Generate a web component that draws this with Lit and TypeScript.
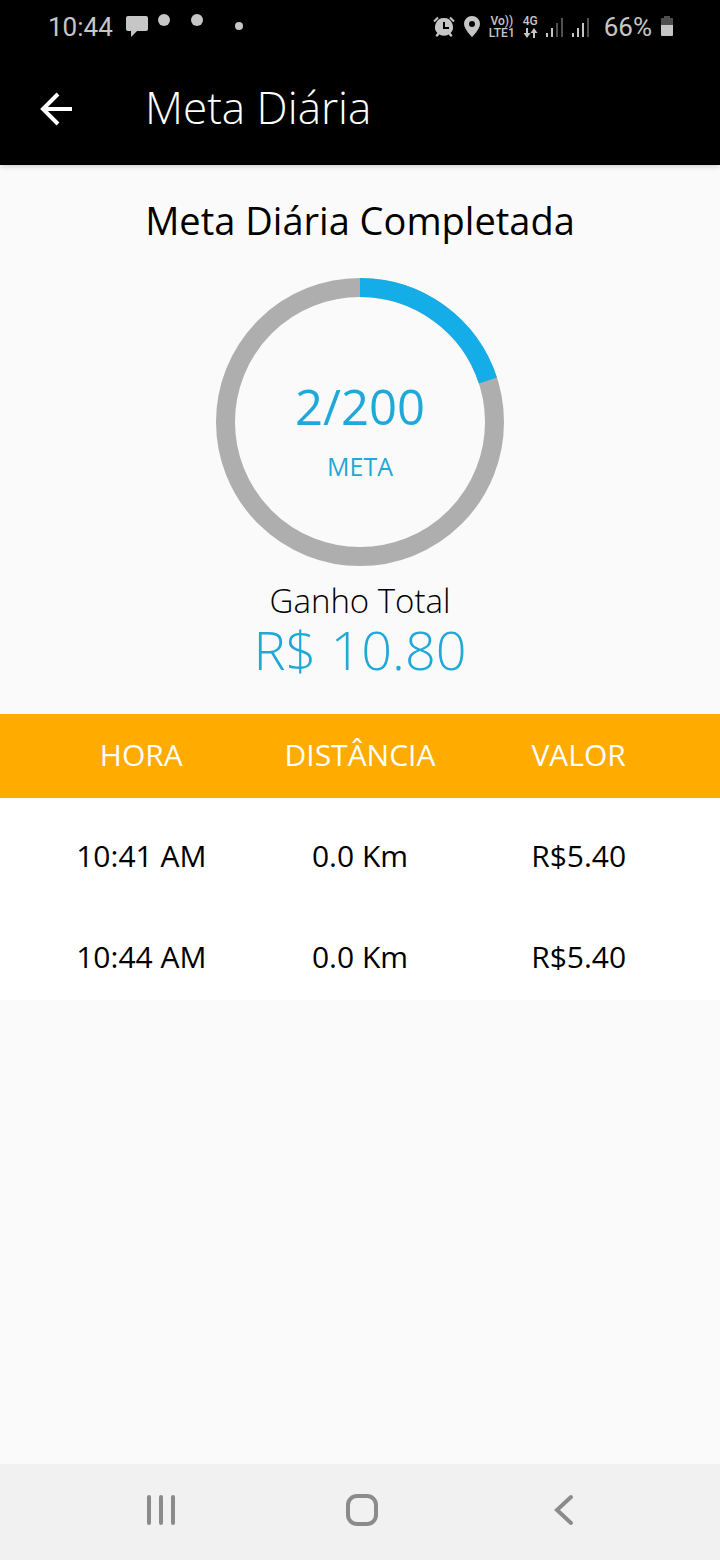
import { LitElement, html, css, svg } from "lit";
import { customElement, property } from "lit/decorators.js";

interface Trip {
  time: string;
  distance: string;
  value: string;
}

@customElement("status-bar")
class StatusBar extends LitElement {
  static styles = css`
    :host {
      display: flex;
      align-items: center;
      justify-content: space-between;
      height: 54px;
      padding: 0 46px 0 48px;
      color: #c6c6c6;
      font-family: Roboto, sans-serif;
      font-size: 26px;
      line-height: 30px;
    }
    .group {
      display: flex;
      align-items: center;
    }
    .left {
      gap: 12px;
    }
    .right {
      gap: 8px;
    }
    .mini {
      font-size: 12px;
      line-height: 12px;
      font-weight: 500;
      text-align: center;
    }
    .network {
      display: flex;
      flex-direction: column;
      align-items: center;
    }
    .percent {
      padding-left: 6px;
    }
    svg {
      display: block;
      fill: currentColor;
    }
  `;

  private signal(strong: number) {
    const bars = [4, 9, 14, 19];
    return html`<svg width="18" height="22" viewBox="0 0 18 22" aria-hidden="true">
      ${bars.map(
        (h, i) =>
          svg`<rect x=${i * 5} y=${21 - h} width="2" height=${h} opacity=${i < strong ? 1 : 0.4}></rect>`
      )}
    </svg>`;
  }

  render() {
    return html`
      <div class="group left">
        <span>10:44</span>
        <svg width="120" height="30" viewBox="0 0 120 30" aria-hidden="true">
          <path d="M3 4h18q2 0 2 2v11q0 2-2 2h-9l-6 6v-6h-3q-2 0-2-2V6q0-2 2-2z" />
          <circle cx="39" cy="8" r="6" />
          <circle cx="72" cy="8" r="6" />
          <circle cx="114" cy="14" r="4" />
        </svg>
      </div>
      <div class="group right">
        <svg width="22" height="22" viewBox="0 0 22 22" aria-hidden="true">
          <path
            fill-rule="evenodd"
            d="M11 2a9 9 0 0 1 6.600 15.100l2 2.400-1.700 1.400-2.300-2.400a9 9 0 0 1-9.200 0l-2.300 2.400-1.700-1.400 2-2.400A9 9 0 0 1 11 2zM10 6v7h6v-2h-4V6z"
          />
          <path d="M1 5.500l4-4M21 5.500l-4-4" stroke="currentColor" stroke-width="2" />
        </svg>
        <svg width="18" height="22" viewBox="0 0 18 22" aria-hidden="true">
          <path
            fill-rule="evenodd"
            d="M9 0a8 8 0 0 1 8 8c0 5-8 13-8 13S1 13 1 8a8 8 0 0 1 8-8zm0 5a3 3 0 1 0 0 6 3 3 0 0 0 0-6z"
          />
        </svg>
        <span class="mini">Vo))<br />LTE1</span>
        <span class="mini network">
          4G
          <svg width="15" height="12" viewBox="0 0 15 12" aria-hidden="true">
            <path d="M3 1h2v5h2.500L4 11 .5 6H3zM10 11V6H7.500L11 1l3.500 5H12v5z" />
          </svg>
        </span>
        ${this.signal(2)} ${this.signal(3)}
        <span class="percent">66%</span>
        <svg width="14" height="22" viewBox="0 0 14 22" aria-hidden="true">
          <path d="M4 0h6v2h3v7H1V2h3z" opacity="0.4" />
          <path d="M1 9h12v10q0 1-1 1H2q-1 0-1-1z" />
        </svg>
      </div>
    `;
  }
}

@customElement("goal-ring")
class GoalRing extends LitElement {
  @property({ type: Number }) percent = 0;
  @property() label = "";

  static styles = css`
    :host {
      display: grid;
      place-items: center;
      width: 288px;
      height: 288px;
      color: #1fa8d8;
    }
    svg,
    .text {
      grid-area: 1 / 1;
    }
    .ring {
      fill: none;
      stroke-width: 19px;
    }
    .track {
      stroke: #aeaeae;
    }
    .done {
      stroke: #14ade8;
    }
    .text {
      display: flex;
      flex-direction: column;
      align-items: center;
      gap: 10px;
      padding-top: 18px;
    }
    .count {
      font-size: 49px;
      line-height: 60px;
    }
    .caption {
      font-size: 25px;
      line-height: 40px;
    }
  `;

  render() {
    return html`
      <svg width="288" height="288" viewBox="0 0 288 288" aria-hidden="true">
        <circle class="ring track" cx="144" cy="144" r="134.500" />
        <circle
          class="ring done"
          cx="144"
          cy="144"
          r="134.500"
          pathLength="100"
          stroke-dasharray="${this.percent} 100"
          transform="rotate(-90 144 144)"
        />
      </svg>
      <div class="text">
        <span class="count">${this.label}</span>
        <span class="caption">META</span>
      </div>
    `;
  }
}

@customElement("app-root")
class AppRoot extends LitElement {
  private trips: Trip[] = [
    { time: "10:41 AM", distance: "0.0 Km", value: "R$5.40" },
    { time: "10:44 AM", distance: "0.0 Km", value: "R$5.40" },
  ];

  static styles = css`
    :host {
      display: flex;
      flex-direction: column;
      min-height: 100vh;
      background: #fafafa;
      color: #000;
      font-family: "Open Sans", "Noto Sans", sans-serif;
    }
    .top {
      background: #000;
      color: #fff;
      box-shadow: 0 1px 6px rgba(0, 0, 0, 0.2);
    }
    .appbar {
      display: flex;
      align-items: center;
      gap: 67px;
      height: 111px;
      padding: 0 34px 2px;
      box-sizing: border-box;
    }
    button {
      display: grid;
      place-items: center;
      padding: 0;
      border: 0;
      background: none;
      color: inherit;
    }
    .back {
      width: 44px;
      height: 44px;
    }
    h1,
    h2,
    p {
      margin: 0;
    }
    h1 {
      padding-bottom: 4px;
      font-size: 44px;
      line-height: 56px;
      font-weight: 300;
    }
    main {
      flex: 1;
    }
    .summary {
      display: flex;
      flex-direction: column;
      align-items: center;
      padding: 27px 16px 38px;
    }
    h2 {
      margin-bottom: 30px;
      font-size: 38px;
      line-height: 56px;
      font-weight: 400;
    }
    .earned {
      padding-top: 14px;
      font-size: 33px;
      line-height: 42px;
      font-weight: 300;
    }
    .total {
      color: #1fa8d8;
      font-size: 54px;
      line-height: 54px;
      font-weight: 300;
    }
    table,
    thead,
    tbody {
      display: block;
    }
    table {
      font-size: 30px;
      line-height: 42px;
      text-align: center;
    }
    tr {
      display: grid;
      grid-template-columns: repeat(3, 1fr);
      padding: 0 32px;
    }
    th,
    td {
      padding: 0;
      font-weight: 400;
    }
    thead {
      background: #ffab00;
      color: #fff;
    }
    th {
      padding: 20px 0 22px;
    }
    tbody {
      background: #fff;
    }
    td {
      padding: 37px 0 22px;
    }
    .nav {
      display: grid;
      grid-template-columns: repeat(3, 1fr);
      height: 96px;
      padding: 0 56px 4px 60px;
      box-sizing: border-box;
      background: #f1f1f1;
      color: #8b8b8b;
    }
    svg {
      display: block;
      fill: none;
      stroke: currentColor;
      stroke-width: 4px;
    }
  `;

  render() {
    return html`
      <header class="top">
        <status-bar></status-bar>
        <div class="appbar">
          <button class="back" aria-label="Voltar">
            <svg width="34" height="34" viewBox="0 0 34 34">
              <path d="M33 17H4M19 2L4 17l15 15" />
            </svg>
          </button>
          <h1>Meta Diária</h1>
        </div>
      </header>
      <main>
        <section class="summary">
          <h2>Meta Diária Completada</h2>
          <goal-ring percent="20" label="2/200"></goal-ring>
          <p class="earned">Ganho Total</p>
          <p class="total">R$ 10.80</p>
        </section>
        <table>
          <thead>
            <tr>
              <th scope="col">HORA</th>
              <th scope="col">DISTÂNCIA</th>
              <th scope="col">VALOR</th>
            </tr>
          </thead>
          <tbody>
            ${this.trips.map(
              (t) => html`<tr>
                <td>${t.time}</td>
                <td>${t.distance}</td>
                <td>${t.value}</td>
              </tr>`
            )}
          </tbody>
        </table>
      </main>
      <nav class="nav">
        <button aria-label="Recentes">
          <svg width="32" height="32" viewBox="0 0 32 32" stroke-linecap="round">
            <path d="M4 3v26M16 3v26M28 3v26" />
          </svg>
        </button>
        <button aria-label="Início">
          <svg width="32" height="32" viewBox="0 0 32 32">
            <rect x="2" y="2" width="28" height="28" rx="9" />
          </svg>
        </button>
        <button aria-label="Voltar à tela anterior">
          <svg width="32" height="32" viewBox="0 0 32 32" stroke-linecap="round">
            <path d="M24 3L10 16l14 13" />
          </svg>
        </button>
      </nav>
    `;
  }
}
